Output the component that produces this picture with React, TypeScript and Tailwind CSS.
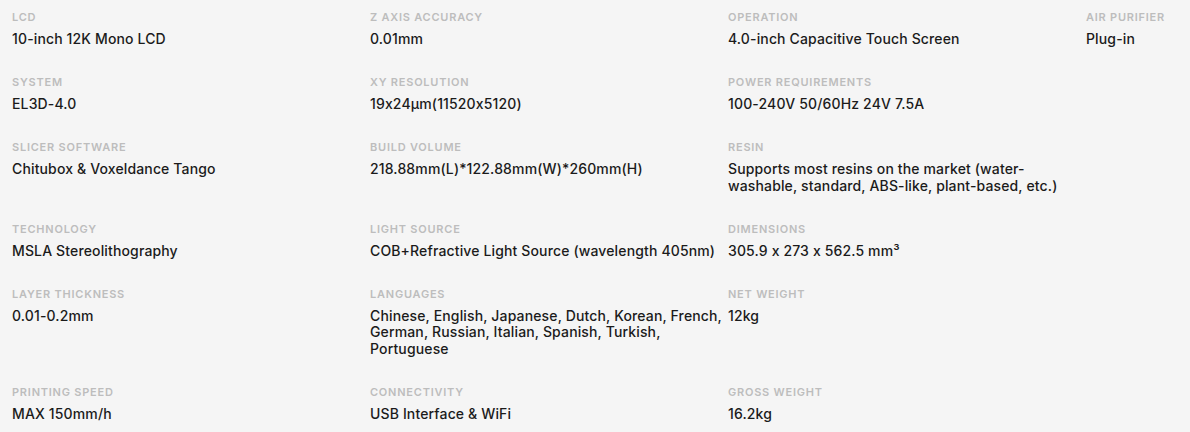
import React from "react";

type Spec = { label: string; value: string };

const ROWS: Spec[][] = [
  [
    { label: "LCD", value: "10-inch 12K Mono LCD" },
    { label: "Z Axis Accuracy", value: "0.01mm" },
    { label: "Operation", value: "4.0-inch Capacitive Touch Screen" },
    { label: "Air Purifier", value: "Plug-in" },
  ],
  [
    { label: "System", value: "EL3D-4.0" },
    { label: "XY Resolution", value: "19x24μm(11520x5120)" },
    { label: "Power Requirements", value: "100-240V 50/60Hz 24V 7.5A" },
  ],
  [
    { label: "Slicer Software", value: "Chitubox & Voxeldance Tango" },
    { label: "Build Volume", value: "218.88mm(L)*122.88mm(W)*260mm(H)" },
    {
      label: "Resin",
      value: "Supports most resins on the market (water-washable, standard, ABS-like, plant-based, etc.)",
    },
  ],
  [
    { label: "Technology", value: "MSLA Stereolithography" },
    { label: "Light Source", value: "COB+Refractive Light Source (wavelength 405nm)" },
    { label: "Dimensions", value: "305.9 x 273 x 562.5 mm³" },
  ],
  [
    { label: "Layer Thickness", value: "0.01-0.2mm" },
    {
      label: "Languages",
      value: "Chinese, English, Japanese, Dutch, Korean, French, German, Russian, Italian, Spanish, Turkish, Portuguese",
    },
    { label: "Net Weight", value: "12kg" },
  ],
  [
    { label: "Printing Speed", value: "MAX 150mm/h" },
    { label: "Connectivity", value: "USB Interface & WiFi" },
    { label: "Gross Weight", value: "16.2kg" },
  ],
];

function SpecItem({ spec }: { spec: Spec }) {
  return (
    <div>
      <div className="text-[11px] font-semibold uppercase tracking-[0.07em] leading-4 text-[#bdbdbd]">
        {spec.label}
      </div>
      <div className="mt-[6px] text-[14px] font-[550] tracking-[0.01em] leading-[16.5px] text-[#1b1b1b]">
        {spec.value}
      </div>
    </div>
  );
}

export default function App() {
  return (
    <div className="min-h-[432px] w-[1190px] overflow-hidden bg-[#f5f5f5] pl-3 pt-[9px] font-['Inter','Open_Sans',sans-serif] [font-feature-settings:'calt'_0]">
      {/* 4 columns; only the first row fills the last one */}
      <div className="grid w-[1440px] grid-cols-[356px_356px_356px_356px] gap-x-[2px] gap-y-[26.5px]">
        {ROWS.map((row, r) => (
          <React.Fragment key={r}>
            {row.map((spec) => (
              <SpecItem key={spec.label} spec={spec} />
            ))}
            {row.length < 4 && <div />}
          </React.Fragment>
        ))}
      </div>
    </div>
  );
}
